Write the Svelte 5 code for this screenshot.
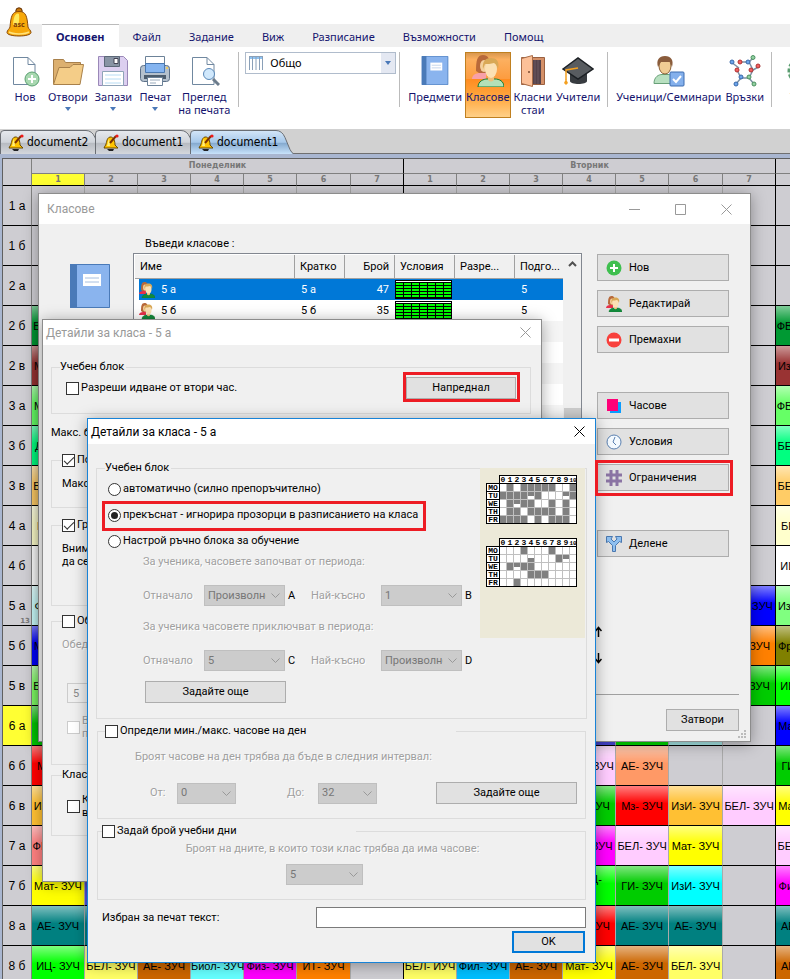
<script>
  const menu = ["Файл", "Задание", "Виж", "Разписание", "Възможности", "Помощ"];
  const docs = ["document2", "document1", "document1"];
  const periods = [1, 2, 3, 4, 5, 6, 7];

  const Z = "- ЗУЧ";
  const lesson = (name, color) => ({ text: name, color });

  // cells: [column, text, colour]
  const timetable = [
    { name: "1 а", cells: [] },
    { name: "1 б", cells: [] },
    { name: "2 а", cells: [] },
    { name: "2 б", cells: [[0, "БЕЛ" + Z, "#009933"], [14, "ФВС" + Z, "#009933"]] },
    { name: "2 в", cells: [[0, "Мат" + Z, "#993333"], [14, "ИзИ" + Z, "#993333"]] },
    { name: "3 а", cells: [[0, "Мат" + Z, "#66ff66"], [14, "ФВС" + Z, "#66ff66"]] },
    { name: "3 б", cells: [[0, "Дет" + Z, "#00ff80"], [14, "БЕЛ" + Z, "#00ff80"]] },
    { name: "3 в", cells: [[0, "БЕЛ" + Z, "#ffcc66"], [14, "БЕЛ" + Z, "#ffcc66"]] },
    { name: "4 а", cells: [[0, "БЕ" + Z, "#ffffcc"], [14, "БЕ" + Z, "#ffffcc"]] },
    { name: "4 б", cells: [[0, "", "#ffffff"], [14, "ИЦ" + Z, "#ffffff"]] },
    { name: "5 а", note: 13, cells: [[0, "Физ" + Z, "#ccffff"], [13, "Мат" + Z, "#0000ff"], [14, "ИзИ" + Z, "#80ff80"]] },
    { name: "5 б", cells: [[0, "Мат" + Z, "#0000ff"], [13, "ИТ" + Z, "#ff8000"], [14, "Фре" + Z, "#808000"]] },
    { name: "5 в", cells: [[0, "БЕЛ" + Z, "#80ff66"], [13, "ГИ" + Z, "#00cc00"], [14, "ИЦ" + Z, "#00ff00"]] },
    { name: "6 а", current: true, cells: [[0, "ГИ" + Z, "#00cc00"], [10, "", "#4d4de6"], [11, "", "#00dd00"], [12, "", "#a6e6e6"], [14, "Мат" + Z, "#0000ff"]] },
    { name: "6 б", cells: [[0, "Мз" + Z, "#ff0000"], [10, "БЕЛ" + Z, "#ffccff"], [11, "АЕ" + Z, "#ff9966"], [14, "ГИ" + Z, "#00cc00"]] },
    { name: "6 в", cells: [[0, "ИзИ" + Z, "#ffc033"], [10, "ГИ" + Z, "#00cc00"], [11, "Мз" + Z, "#ff0000"], [12, "ИзИ" + Z, "#ffc033"], [13, "БЕЛ" + Z, "#ffccff"], [14, "Мат" + Z, "#ffff00"]] },
    { name: "7 а", cells: [[0, "ФВС" + Z, "#ff8080"], [10, "Физ" + Z, "#ff00ff"], [11, "БЕЛ" + Z, "#ffccff"], [12, "Мат" + Z, "#ffff00"], [14, "БЕЛ" + Z, "#ffccff"]] },
    { name: "7 б", cells: [[0, "Мат" + Z, "#ffff00"], [1, "", "#5050e6"], [10, "ГИЦ-\n1", "#00ff00"], [11, "ГИ" + Z, "#00cc00"], [12, "ИзИ" + Z, "#00ffff"], [14, "Физ" + Z, "#ff00ff"]] },
    { name: "8 а", cells: [[0, "АЕ" + Z, "#008080"], [1, "", "#008080"], [10, "Мз" + Z, "#ff0000"], [11, "АЕ" + Z, "#008080"], [12, "АЕ" + Z, "#008080"], [14, "АЕ" + Z, "#008080"]] },
    { name: "8 б", cells: [[0, "ИЦ" + Z, "#00ff00"], [1, "БЕЛ" + Z, "#ffff66"], [2, "АЕ" + Z, "#cc6600"], [3, "Биол" + Z, "#66ffff"], [4, "Физ" + Z, "#ff00ff"], [5, "ИТ" + Z, "#ff8000"], [7, "БЕЛ- ИУЧ", "#ffff66"], [8, "Фил" + Z, "#00bfff"], [9, "АЕ" + Z, "#cc6600"], [10, "Мат" + Z, "#ffff00"], [11, "АЕ" + Z, "#cc6600"], [12, "БЕЛ" + Z, "#ffff66"], [14, "АЕ" + Z, "#cc6600"]] },
  ].map((row) => {
    const slots = Array(15).fill(null);
    row.cells.forEach(([i, text, color]) => (slots[i] = lesson(text, color)));
    return { ...row, slots };
  });

  const classes = [
    { name: "5 а", count: 47, prep: 5 },
    { name: "5 б", count: 35, prep: 5 },
    ...Array(12).fill(null),
  ];

  const days = ["MO", "TU", "WE", "TH", "FR"];
  // g = taken, t = top half, b = bottom half
  const charts = [
    [".g.ggggg..g", "ggggtg...tg", ".gtgg..g.g.", ".gg.gggg.g.", "gggg.g.ggg."],
    ["...g...g...", "....b...gt.", ".gtgg......", "....ggg....", "..g........"],
  ];

  let mode = "split";
  let printText = "";
</script>

{#snippet bell()}
  <svg class="bell" viewBox="0 0 26 30" aria-hidden="true">
    <circle cx="13" cy="4" r="3.2" fill="#c8780c" stroke="#5f2f06" />
    <path d="M4 20C5 9 6 4.500 13 4.500s8 4.500 9 15.500c.4 2 3 3 3 5.500 0 2-5 3.500-12 3.500S1 27.500 1 25.500C1 23 3.600 22 4 20z" fill="#f7a80a" stroke="#8a4a08" />
    <path d="M7 18c.5-7 1.500-11 5-11.500 1.500 0 1.500 3 .5 12z" fill="#ffe95c" />
    <path d="M3 25c4 2.500 16 2.500 20 0" fill="none" stroke="#ffe27a" stroke-width="1.500" />
    <text x="13" y="20" text-anchor="middle" font-size="7" font-weight="bold" fill="#7a3d06">asc</text>
  </svg>
{/snippet}

{#snippet smallBell()}
  <svg class="small-bell" viewBox="0 0 16 17" aria-hidden="true">
    <path d="M4 15h7l-1 2H6z" fill="#222" />
    <path d="M2 12C4 10 3 4 7 3c4-.5 5 5 5 8l3 3H1z" fill="#ffc400" stroke="#6b4a00" />
    <path d="M6 5c-1.500 2-1 4-2 7h3z" fill="#fff07a" />
    <path d="M7 9l6-7" stroke="#7a3000" stroke-width="2" />
    <circle cx="14" cy="2" r="1.600" fill="#f01818" />
  </svg>
{/snippet}

{#snippet people()}
  <svg class="people" viewBox="0 0 32 32" aria-hidden="true">
    <path d="M0 24c0-4 4-6 8-6h6v6z" fill="var(--dress, #e8304a)" />
    <path d="M4 16C4 6 5 0 11 0c6 0 7 5 7 15l-4 3H7z" fill="#b8693a" />
    <ellipse cx="12" cy="11" rx="4" ry="6" fill="#f4cf9c" />
    <path d="M6 32c0-6 6-8 9-8h8c4 0 9 2 9 8z" fill="var(--shirt, #128a3c)" stroke="#147a30" />
    <path d="M16 20h6v5q-3 3-6 0z" fill="#eec07c" />
    <ellipse cx="19" cy="14" rx="6" ry="9" fill="#fbe0b4" />
    <path d="M11 14c-1-8 3-11 8-11s9 3 7 11c-1-3-2-5-4-6-3 1-7 1-9 1z" fill="#d9a856" />
  </svg>
{/snippet}

{#snippet book()}
  <svg class="book" viewBox="0 0 40 44" aria-hidden="true">
    <rect x="0" y="0" width="40" height="44" rx="1" fill="#8ab4ee" />
    <rect x="0" y="0" width="7" height="44" fill="#4a7ab8" />
    <path d="M.5.5h39v43H.500z" fill="none" stroke="#4a7ab8" />
    <path d="M13 10h18v12H13z" fill="#fff" />
    <path d="M15 14h14M15 18h14" stroke="#a8c0e0" />
  </svg>
{/snippet}

{#snippet cross()}
  <svg class="cross" viewBox="0 0 11 11" aria-hidden="true"><path d="M.5.5l10 10M10.500.5l-10 10" stroke="currentColor" fill="none" /></svg>
{/snippet}

{#snippet drop(value, label)}
  <span class="drop">
    <select disabled aria-label={label}><option>{value}</option></select>
    <svg viewBox="0 0 9 5" aria-hidden="true"><path d="M.5.5l4 4 4-4" fill="none" stroke="#999" /></svg>
  </span>
{/snippet}

{#snippet chart(rows)}
  <svg class="chart" viewBox="0 0 91 49" aria-hidden="true">
    <path d="M13 0h78v49H0V8h13z" fill="#000" />
    <path d="M14 1h76v7H14z" fill="#fff" />
    <path d="M14 9h76v39H14z" fill="#c0c0c0" />
    {#each rows as row, r}
      <rect x="1" y={9 + r * 8} width="12" height="7" fill="#fff" />
      <text x="7" y={15 + r * 8} font-size="8">{days[r]}</text>
      {#each row.split("") as cell, c}
        <rect x={14 + c * 7} y={9 + r * 8} width="6" height="7" fill={cell === "g" ? "#808080" : "#fff"} />
        {#if cell === "t" || cell === "b"}
          <rect x={14 + c * 7} y={(cell === "t" ? 9 : 12) + r * 8} width="6" height="4" fill="#808080" />
        {/if}
      {/each}
    {/each}
    {#each Array(11) as _, c}
      <text x={17 + c * 7} y="7" font-size={c === 10 ? 6 : 8}>{c}</text>
    {/each}
  </svg>
{/snippet}

<div class="app">
  <header>
    <div class="logo">{@render bell()}</div>
    <nav>
      <a class="active" href="#home">Основен</a>
      {#each menu as item}
        <a href="#{item}">{item}</a>
      {/each}
    </nav>
  </header>

  <div class="ribbon">
    <div class="group files">
      <button>
        <svg viewBox="0 0 32 32"><path d="M4.500 2.500H19l7 7v20H4.500z" fill="#fff" stroke="#7088a0" /><path d="M19 2.500v7h7" fill="none" stroke="#7088a0" /><circle cx="23" cy="24" r="7" fill="#a8d8b0" stroke="#5aa070" /><path d="M23 20v8M19 24h8" stroke="#fff" stroke-width="2" /></svg>
        <span>Нов</span>
      </button>
      <button>
        <svg viewBox="0 0 32 32"><path d="M1.500 29V4.500h10l2 3h15v6" fill="#dcb070" stroke="#a8804a" /><path d="M1.500 29.500L7 12.500h11l3-3h10.500L28 29.500z" fill="#f4cd88" stroke="#a8804a" /></svg>
        <span>Отвори</span><i></i>
      </button>
      <button>
        <svg viewBox="0 0 32 32"><path d="M1.500 1.500h25l4 4v25h-29z" fill="#dccff0" stroke="#9a88b8" /><path d="M7.500 1.500h15v10h-15z" fill="#8894a4" stroke="#5c6878" /><path d="M17 3.500h4v5h-4z" fill="#fff" stroke="#445" /><path d="M5.500 16.500h21v14h-21z" fill="#fff" stroke="#8fa4b8" /><path d="M8 20h16M8 24h16M8 28h16" stroke="#b8dcf4" /></svg>
        <span>Запази</span><i></i>
      </button>
      <button>
        <svg viewBox="0 0 32 32"><path d="M6.500 1.500h19v9h-19z" fill="#fff" stroke="#6c8298" /><rect x="1.500" y="10.500" width="29" height="16" rx="3" fill="#b4c0cc" stroke="#5c7088" /><path d="M6.500 8.500h19v9h-19z" fill="#84b4f0" stroke="#4a78b0" /><path d="M5 20h22v4H5z" fill="#4c5c6c" /><path d="M8.500 22.500h15v8h-15z" fill="#fff" stroke="#6c8298" /><path d="M11 25h10M11 28h6" stroke="#9ab" /><circle cx="28" cy="13" r="1" fill="#ffd040" /></svg>
        <span>Печат</span><i></i>
      </button>
      <button>
        <svg viewBox="0 0 32 32"><path d="M4.500 2.500H19l7 7v20H4.500z" fill="#fff" stroke="#7088a0" /><path d="M19 2.500v7h7" fill="none" stroke="#7088a0" /><path d="M25 24l6 6" stroke="#6c7c8c" stroke-width="3" /><circle cx="21" cy="19" r="5.500" fill="#d0e8fc" stroke="#5a88b8" /></svg>
        <span>Преглед<br />на печата</span>
      </button>
    </div>
    <div class="view">
      <svg viewBox="0 0 14 14" aria-hidden="true"><path d="M0 0h14v3H0z" fill="#8ec4f4" /><path d="M.5 0v14M3.500 0v14M7 0v14M10.500 0v14M13.500 0v14M0 .5h14" stroke="#8aa0b8" fill="none" /></svg>
      <select aria-label="Изглед"><option>Общо</option></select>
      <i></i>
    </div>
    <div class="group">
      <button>
        {@render book()}
        <span>Предмети</span>
      </button>
      <button class="on">
        {@render people()}
        <span>Класове</span>
      </button>
      <button>
        <svg viewBox="0 0 32 32"><path d="M4.500 2.500h23v27h-23z" fill="#d49068" stroke="#9a6040" /><path d="M10 5h14v24H10z" fill="#54424a" /><path d="M18 5v24M21 5v24" stroke="#6c5860" /><path d="M4.500 3.500l11-3v31l-11-3z" fill="#fcc098" stroke="#a86c48" /><circle cx="12" cy="17" r="1" fill="#7a4a30" /></svg>
        <span>Класни<br />стаи</span>
      </button>
      <button>
        <svg viewBox="0 0 32 32"><path d="M8 17v9c0 4 17 4 17 0v-9" fill="#383c40" /><path d="M1 14L16 3l15 11-15 10z" fill="#585c60" stroke="#1c2024" stroke-width="1.500" /><path d="M16 13L4 15v10" stroke="#f4a020" fill="none" stroke-width="1.500" /><path d="M4 24l-2 4 2 2 2-2z" fill="#f4a020" /></svg>
        <span>Учители</span>
      </button>
    </div>
    <div class="group">
      <button>
        <svg viewBox="0 0 32 32"><path d="M1 28.500c0-7 5-9 8-9h6c4 0 8 2 8 9z" fill="#b8e0c0" stroke="#68a078" /><ellipse cx="12" cy="11" rx="6" ry="8" fill="#f0cc94" stroke="#8a6038" /><path d="M5 12C3 5 6 1 12 1s9 4 7 11l-2-5H8z" fill="#8a5c3c" /><rect x="17" y="17" width="14" height="14" rx="1" fill="#84b0ec" stroke="#3c6cb0" /><path d="M20 24l3 3 5-6" stroke="#fff" fill="none" stroke-width="2" /></svg>
        <span>Ученици/Семинари</span>
      </button>
      <button>
        <svg viewBox="0 0 32 32"><path d="M2 7l8 6M10 7h8M8 15l4 8M14 7h6l4 8-4 8h-8M20 7l5-5M24 15l7-4M20 23l5 6M12 23l-5 6" stroke="#7c90a4" fill="none" stroke-width="1.500" /><g stroke-width="1"><g fill="#6ca4ec" stroke="#3868a8"><circle cx="3" cy="7" r="2" /><circle cx="19" cy="7" r="2" /><circle cx="12" cy="22" r="2" /><circle cx="7" cy="29" r="2" /></g><g fill="#f06060" stroke="#b03030"><circle cx="11" cy="7" r="2" /><circle cx="8" cy="15" r="2" /><circle cx="22" cy="15" r="2" /><circle cx="29" cy="11" r="2" /></g><g fill="#90d0a0" stroke="#4c9060"><circle cx="24" cy="2.500" r="2" /><circle cx="20" cy="22" r="2" /><circle cx="25" cy="29" r="2" /></g></g></svg>
        <span>Връзки</span>
      </button>
    </div>
    <div class="group tests">
      <button>
        <svg viewBox="0 0 32 32"><circle cx="16" cy="16" r="12" fill="#b8e0c0" stroke="#5a9c70" stroke-width="3" stroke-dasharray="4 2" /></svg>
        <span>Тест</span>
      </button>
    </div>
  </div>

  <div class="docs">
    {#each docs as doc, i}
      <button class:open={i === 2}>
        <svg class="shape" viewBox="0 0 104 24" aria-hidden="true">
          <defs>
            <linearGradient id="tab{i}" x1="0" y1="0" x2="0" y2="1">
              <stop offset="0" stop-color={i === 2 ? "#d4e6f8" : "#e6e9ee"} />
              <stop offset=".5" stop-color={i === 2 ? "#a6c8ea" : "#d0d4da"} />
              <stop offset=".55" stop-color={i === 2 ? "#86abd0" : "#b8bcc2"} />
              <stop offset="1" stop-color={i === 2 ? "#c8e2fa" : "#d4d7dc"} />
            </linearGradient>
          </defs>
          <path d="M.5 24V4Q.5.5 4 .5h82q6 0 9 7l5 12q2 4 4 4.500" fill="url(#tab{i})" stroke="#6a6e74" />
        </svg>
        {@render smallBell()}
        <span>{doc}</span>
      </button>
    {/each}
  </div>

  <main>
    <table class="plan">
      <colgroup>
        <col class="names" />
        {#each Array(15) as _, i}<col class:wide={i % 7 === 5} />{/each}
      </colgroup>
      <thead>
        <tr class="day">
          <th rowspan="2"></th>
          <th colspan="7" class="last">Понеделник</th>
          <th colspan="7" class="last">Вторник</th>
          <th></th>
        </tr>
        <tr class="period">
          {#each [0, 1] as day}
            {#each periods as p}
              <th class:last={p === 7} class:current={day === 0 && p === 1}>{p}</th>
            {/each}
          {/each}
          <th></th>
        </tr>
      </thead>
      <tbody>
        {#each timetable as row}
          <tr>
            <th class:current={row.current}>{row.name}{#if row.note}<small>{row.note}</small>{/if}</th>
            {#each row.slots as slot, i}
              {#if slot}
                <td class="filled" class:last={i % 7 === 6} style="--c: {slot.color}">{slot.text}</td>
              {:else}
                <td class:last={i % 7 === 6}></td>
              {/if}
            {/each}
          </tr>
        {/each}
      </tbody>
    </table>
  </main>

  <section class="window classes">
    <div class="title">
      <h2>Класове</h2>
      <div class="controls">
        <button aria-label="Намали"><svg viewBox="0 0 11 11"><path d="M0 5.500h11" stroke="currentColor" /></svg></button>
        <button aria-label="Увеличи"><svg viewBox="0 0 11 11"><path d="M.5.5h10v10H.500z" stroke="currentColor" fill="none" /></svg></button>
        <button aria-label="Затвори прозореца">{@render cross()}</button>
      </div>
    </div>
    <div class="classes-body">
      {@render book()}
      <div class="list-column">
        <p>Въведи класове :</p>
        <div class="list">
          <table>
            <colgroup><col class="c160" /><col class="c50" /><col class="c50" /><col class="c60" /><col class="c60" /><col class="c48" /></colgroup>
            <thead>
              <tr><th>Име</th><th>Кратко</th><th class="num">Брой</th><th>Условия</th><th>Разре...</th><th>Подго...</th></tr>
            </thead>
            <tbody>
              {#each classes as c, i}
                <tr class:selected={i === 0}>
                  {#if c}
                    <td><div class="who">{@render people()}{c.name}</div></td>
                    <td>{c.name}</td>
                    <td class="num">{c.count}</td>
                    <td class="terms">
                      <svg viewBox="0 0 57 19" aria-hidden="true">
                        <path d="M0 0h57v19H0z" />
                        <path d="M1 1h55v1H1z" fill="#fff" />
                        {#each Array(35) as _, k}
                          <rect x={1 + (k % 7) * 8} y={3 + Math.floor(k / 7) * 3} width="7" height="2" fill="#00ff00" />
                        {/each}
                      </svg>
                    </td>
                    <td></td>
                    <td>{c.prep}</td>
                  {:else}
                    <td colspan="6"></td>
                  {/if}
                </tr>
              {/each}
            </tbody>
          </table>
          <div class="scroll">
            <svg viewBox="0 0 9 6" aria-hidden="true"><path d="M1 5l3.500-3.500L8 5" fill="none" stroke="#505050" stroke-width="2" /></svg>
            <span></span>
          </div>
        </div>
      </div>
      <div class="side">
        <div>
          <button><svg viewBox="0 0 16 16"><circle cx="8" cy="8" r="7.500" fill="#3fbf4f" /><path d="M8 4v8M4 8h8" stroke="#fff" stroke-width="2" /></svg>Нов</button>
          <button>{@render people()}Редактирай</button>
          <button><svg viewBox="0 0 16 16"><circle cx="8" cy="8" r="7.500" fill="#f8403c" /><path d="M3 8h10" stroke="#fff" stroke-width="3" /></svg>Премахни</button>
        </div>
        <div>
          <button><svg viewBox="0 0 16 16"><path d="M4 4h11v11H4z" fill="#0a9cff" /><path d="M1 1h11v12H1z" fill="#ff0078" /></svg>Часове</button>
          <button><svg viewBox="0 0 16 16"><circle cx="8" cy="8" r="7" fill="#f4faff" stroke="#5a80b0" /><path d="M9 3L7 8l3 3" stroke="#5a80b0" fill="none" /></svg>Условия</button>
          <button><svg viewBox="0 0 16 16"><path d="M5 0v16M11 0v16M0 5h16M0 11h16" stroke="#8b74a4" stroke-width="3" /></svg>Ограничения</button>
        </div>
        <div>
          <button><svg viewBox="0 0 16 16"><path d="M6.500 15.500V9.500L2.500 5.500.5 6.500V.5h6L5 3l3 3 3-3L9.500.5h6v6l-2-1-4 4v6z" fill="#8fc0f0" stroke="#4a78b0" /></svg>Делене</button>
        </div>
        <svg class="arrows" viewBox="0 0 8 38" aria-hidden="true"><path d="M4.500 11V2M1.500 5l3-3.500 3 3.500M4.500 27v9M1.500 33l3 3.500 3-3.500" fill="none" stroke="#000" stroke-width="1.500" /></svg>
      </div>
    </div>
    <div class="classes-foot"><button class="btn">Затвори</button></div>
    <svg class="grip" viewBox="0 0 9 9" aria-hidden="true"><path d="M6 0h2v2H6zM3 3h2v2H3zM6 3h2v2H6zM0 6h2v2H0zM3 6h2v2H3zM6 6h2v2H6z" fill="#bbb" /></svg>
  </section>

  <section class="window details">
    <div class="title">
      <h2>Детайли за класа - 5 а</h2>
      <button aria-label="Затвори прозореца">{@render cross()}</button>
    </div>
    <div class="details-body">
      <fieldset class="first">
        <legend>Учебен блок</legend>
        <div class="row">
          <label><input type="checkbox" />Разреши идване от втори час.</label>
          <button class="btn">Напреднал</button>
        </div>
      </fieldset>
      <p class="gaps">Макс. бр.</p>
      <fieldset class="f55">
        <legend><label><input type="checkbox" checked />По</label></legend>
        <p>Макс.</p>
      </fieldset>
      <fieldset class="f88">
        <legend><label><input type="checkbox" checked />Гр</label></legend>
        <p>Внима<br />да се</p>
      </fieldset>
      <fieldset class="f151">
        <legend><label><input type="checkbox" />Об</label></legend>
        <p class="off">Обед</p>
        <input class="lunch" value="5" disabled aria-label="Обед" />
        <label class="off"><input type="checkbox" disabled /><span>В<br />п</span></label>
      </fieldset>
      <fieldset class="f68">
        <legend>Класен</legend>
        <label><input type="checkbox" /><span>К<br />в</span></label>
      </fieldset>
    </div>
  </section>

  <section class="window advanced">
    <div class="title">
      <h2>Детайли за класа - 5 а</h2>
      <button aria-label="Затвори прозореца">{@render cross()}</button>
    </div>
    <div class="advanced-body">
      <fieldset class="block">
        <legend>Учебен блок</legend>
        <div class="split">
          <div class="options">
            <label><input type="radio" bind:group={mode} value="auto" />автоматично (силно препоръчително)</label>
            <label><input type="radio" bind:group={mode} value="split" />прекъснат - игнорира прозорци в разписанието на класа</label>
            <label><input type="radio" bind:group={mode} value="manual" />Настрой ръчно блока за обучение</label>
            <p class="hint">За ученика, часовете започват от периода:</p>
            <div class="range">
              <span>Отначало</span>{@render drop("Произволно", "Започват отначало")}<b>A</b>
              <span>Най-късно</span>{@render drop("1", "Започват най-късно")}<b>B</b>
            </div>
            <p class="hint">За ученика часовете приключват в периода:</p>
            <div class="range">
              <span>Отначало</span>{@render drop("5", "Приключват отначало")}<b>C</b>
              <span>Най-късно</span>{@render drop("Произволно", "Приключват най-късно")}<b>D</b>
            </div>
            <button class="btn more">Задайте още</button>
          </div>
          <div class="samples">
            {#each charts as rows}{@render chart(rows)}{/each}
          </div>
        </div>
      </fieldset>

      <fieldset class="limits">
        <legend><label><input type="checkbox" />Определи мин./макс. часове на ден</label></legend>
        <p class="hint">Броят часове на ден трябва да бъде в следния интервал:</p>
        <div class="interval">
          <span>От:</span>{@render drop("0", "От")}
          <span>До:</span>{@render drop("32", "До")}
          <button class="btn more">Задайте още</button>
        </div>
      </fieldset>

      <fieldset class="count">
        <legend><label><input type="checkbox" />Задай брой учебни дни</label></legend>
        <p class="hint">Броят на дните, в които този клас трябва да има часове:</p>
        {@render drop("5", "Брой дни")}
      </fieldset>

      <div class="print">
        <label for="print">Избран за печат текст:</label>
        <input id="print" type="text" bind:value={printText} />
      </div>
      <button class="btn ok">OK</button>
    </div>
  </section>

  <div class="mark mark-limits"></div>
  <div class="mark mark-advanced"></div>
  <div class="mark mark-split"></div>
</div>

<style>
  :global(body) {
    background: #fff;
  }

  .app {
    position: relative;
    height: 100vh;
    overflow: hidden;
    font: 11px/14px "Noto Sans", "Open Sans", sans-serif;
    color: #000;
  }

  .app :global(*) {
    box-sizing: border-box;
  }

  button, select, input {
    font: inherit;
    color: inherit;
    margin: 0;
  }

  button {
    border: 0;
    padding: 0;
    background: none;
  }

  h2, p {
    margin: 0;
    font-size: inherit;
    font-weight: normal;
  }

  svg {
    display: block;
    flex: none;
  }

  /* menu */
  header {
    display: flex;
    padding-top: 24px;
    background: linear-gradient(#fff 24px, #efefef 24px);
    height: 47px;
  }

  .logo {
    width: 42px;
    margin-top: -17px;
    padding-left: 6px;
  }

  .bell {
    width: 26px;
    height: 30px;
  }

  nav {
    display: flex;
  }

  nav a {
    padding: 6px 14px 3px;
    color: #14146e;
    text-decoration: none;
    white-space: nowrap;
  }

  nav a.active {
    padding: 5px 14px 3px;
    background: #fff;
    border-top: 1px solid #bbb;
    font-weight: bold;
  }

  /* ribbon */
  .ribbon {
    display: flex;
    align-items: flex-start;
    height: 82px;
    padding: 5px 0 0 8px;
    color: #14146e;
    overflow: hidden;
  }

  .group {
    display: flex;
    flex: none;
    gap: 2px;
    padding: 0 6px 0 7px;
    border-right: 1px solid #bbb;
    height: 55px;
  }

  .group.files {
    gap: 5px;
    padding: 0 7px 0 0;
  }

  .group.tests {
    padding-left: 12px;
  }

  .view + .group {
    border-left: 1px solid #bbb;
    margin-left: 3px;
  }

  .group button {
    display: flex;
    flex-direction: column;
    align-items: center;
    min-width: 34px;
    height: 66px;
    padding: 3px 1px 0;
    line-height: 13px;
  }

  .group button svg {
    width: 32px;
    height: 32px;
  }

  .group button .book {
    height: 29px;
    margin: 1px 0 2px;
  }

  .group button span {
    margin-top: 3px;
    white-space: nowrap;
  }

  .group button.on {
    --dress: #f8a0a8;
    --shirt: #b4e0b8;
    border: 1px solid #c08020;
    padding: 2px 0 0;
    background: linear-gradient(#d89850, #fcb060 10%, #fc9c40 40%, #ff8c20 41%, #ffa840 70%, #ffd088);
  }

  .ribbon i {
    border: 3px solid transparent;
    border-top: 4px solid #4a78b8;
    border-bottom: 0;
    margin-top: 4px;
  }

  .view {
    display: flex;
    align-items: center;
    width: 151px;
    height: 22px;
    flex: none;
    margin-left: 6px;
    border: 1px solid #b0bccc;
    color: #000;
    padding-left: 3px;
  }

  .view svg {
    width: 14px;
    height: 14px;
  }

  .view select {
    flex: 1;
    appearance: none;
    border: 0;
    background: none;
    padding: 0 7px;
    font-size: 11px;
  }

  .view i {
    margin: 0;
    width: 14px;
    height: 20px;
    border: 0;
    background: #e4e8f2;
    display: grid;
    place-items: center;
  }

  .view i::before {
    content: "";
    border: 3px solid transparent;
    border-top: 4px solid #4a78b8;
    border-bottom: 0;
  }

  /* documents */
  .docs {
    display: flex;
    height: 25px;
    padding-top: 1px;
    background: #d1d1d1;
    border-bottom: 1px solid #707070;
  }

  .docs button {
    position: relative;
    display: flex;
    align-items: center;
    flex: none;
    gap: 3px;
    width: 104px;
    height: 24px;
    margin-right: -9px;
    padding-left: 8px;
    font-family: "DejaVu Sans Condensed", "DejaVu Sans", sans-serif;
    font-size: 12px;
  }

  .docs button.open {
    z-index: 1;
  }

  .shape {
    position: absolute;
    inset: 0;
  }

  .small-bell {
    position: relative;
    width: 16px;
    height: 17px;
  }

  .docs span {
    position: relative;
  }

  /* timetable */
  main {
    padding: 4px 0 0 2px;
    background: #a9b6d0;
  }

  .plan {
    width: 828px;
    table-layout: fixed;
    border-collapse: separate;
    border-spacing: 0;
    border: 1px solid #606060;
    background: #cecdd2;
    font-family: "Liberation Sans", Arial, sans-serif;
  }

  .plan col {
    width: 53px;
  }

  .plan col.wide {
    width: 54px;
  }

  .plan col.names {
    width: 29px;
  }

  .plan th, .plan td {
    padding: 0;
    border-right: 1px solid #aaa;
    border-bottom: 1px solid #000;
    text-align: center;
    font-weight: normal;
    white-space: pre;
  }

  .plan thead th {
    color: #777;
    border-color: #808080;
    font: bold 8px/10px "DejaVu Sans", sans-serif;
  }

  .plan .day th {
    height: 15px;
  }

  .plan .period th {
    height: 12px;
  }

  .plan .period th, .plan .day th[rowspan] {
    border-bottom-color: #000;
  }

  .plan tbody th {
    position: relative;
    height: 40px;
    border-right-color: #808080;
    font-size: 12px;
  }

  .plan small {
    position: absolute;
    right: 1px;
    bottom: 0;
    color: #777;
    font: bold 7px/8px "DejaVu Sans", sans-serif;
  }

  .plan .last {
    border-right-color: #000;
  }

  .plan .current {
    background: #ffff33;
  }

  .plan .filled {
    background: linear-gradient(rgba(255, 255, 255, 0.5), rgba(255, 255, 255, 0) 45%) var(--c);
  }

  /* windows */
  .window {
    position: absolute;
    background: #f0f0f0;
    border: 1px solid #8c8c8c;
    box-shadow: 0 2px 14px rgba(0, 0, 0, 0.35);
    font-family: Roboto, "Liberation Sans", sans-serif;
  }

  .title {
    display: flex;
    justify-content: space-between;
    align-items: center;
    height: 25px;
    padding: 0 10px 0 3px;
    background: #fff;
    color: #999;
    font-size: 12px;
  }

  .title svg {
    width: 11px;
    height: 11px;
  }

  .controls {
    display: flex;
    gap: 35px;
  }

  .btn {
    height: 22px;
    border: 1px solid #adadad;
    background: #e1e1e1;
  }

  fieldset {
    margin: 0;
    border: 1px solid #dcdcdc;
    padding: 0 14px 0 8px;
    min-width: 0;
  }

  legend {
    height: 14px;
    padding: 0 2px 0 0;
  }

  label {
    display: flex;
    align-items: center;
    gap: 2px;
    white-space: nowrap;
  }

  input[type="checkbox"], input[type="radio"] {
    appearance: none;
    flex: none;
    display: grid;
    place-items: center;
    width: 13px;
    height: 13px;
    border: 1px solid #333;
    background: #fff;
  }

  input[type="checkbox"]:checked::before {
    content: "";
    width: 9px;
    height: 4px;
    border: solid #333;
    border-width: 0 0 1px 1px;
    transform: translateY(-1px) rotate(-45deg);
  }

  input[type="checkbox"]:disabled {
    border-color: #ccc;
  }

  input[type="radio"] {
    border-radius: 50%;
  }

  input[type="radio"]:checked::before {
    content: "";
    width: 7px;
    height: 7px;
    border-radius: 50%;
    background: #222;
  }

  .hint, .off, .range span, .interval span {
    color: #a0a0a0;
    text-shadow: 1px 1px #fff;
    white-space: nowrap;
  }

  /* classes */
  .classes {
    left: 38px;
    top: 193px;
    width: 713px;
  }

  .classes .title {
    height: 30px;
    padding: 0 18px 0 8px;
  }

  .classes-body {
    display: flex;
    align-items: flex-start;
  }

  .classes-body > .book {
    width: 40px;
    height: 44px;
    margin: 40px 23px 0 31px;
  }

  .list-column {
    width: 449px;
    padding-top: 13px;
  }

  .list-column p {
    padding: 0 12px 2px;
  }

  .list {
    display: flex;
    border: 1px solid #828790;
    background: #fff;
    padding: 1px 0 0 1px;
  }

  .list table {
    width: 428px;
    table-layout: fixed;
    border-collapse: separate;
    border-spacing: 0;
  }

  .c160 { width: 160px; }
  .c60 { width: 60px; }
  .c50 { width: 50px; }
  .c48 { width: 48px; }

  .list th {
    height: 24px;
    padding: 0 5px;
    border-right: 1px solid #a0a0a0;
    border-bottom: 1px solid #a0a0a0;
    background: #f0f0f0;
    font-weight: normal;
    text-align: left;
    white-space: nowrap;
  }

  .list th:last-child {
    border-right: 0;
  }

  .list td {
    height: 21px;
    padding: 0 6px;
  }

  .list tr:nth-child(odd) td {
    background: #f5f5f5;
  }

  .list tr.selected td {
    background: #0078d7;
    color: #fff;
  }

  .list td:first-child {
    padding: 0 4px;
    box-shadow: inset 4px 0 #fff;
  }

  .list .num {
    text-align: right;
  }

  .list .terms {
    padding: 0;
  }

  .terms svg {
    width: 57px;
    height: 19px;
  }

  .who {
    display: flex;
    align-items: center;
    gap: 6px;
  }

  .people {
    width: 16px;
    height: 16px;
  }

  .scroll {
    width: 18px;
    background: #f0f0f0;
    display: flex;
    flex-direction: column;
    align-items: center;
  }

  .scroll svg {
    width: 9px;
    height: 6px;
    margin: 6px 0 141px;
  }

  .scroll span {
    width: 17px;
    height: 60px;
    background: #cdcdcd;
  }

  .side {
    display: flex;
    flex-direction: column;
    gap: 39px;
    width: 132px;
    margin-left: 15px;
    padding-top: 30px;
  }

  .side div {
    display: flex;
    flex-direction: column;
    gap: 9px;
  }

  .side button {
    display: flex;
    align-items: center;
    gap: 7px;
    height: 27px;
    padding-left: 8px;
    border: 1px solid #adadad;
    background: #e1e1e1;
  }

  .side button svg {
    width: 16px;
    height: 16px;
  }

  .arrows {
    width: 8px;
    height: 38px;
    margin: 30px 0 0 -3px;
  }

  .classes-foot {
    display: flex;
    justify-content: flex-end;
    margin: 30px 11px 0;
    padding: 14px 0 10px;
    border-top: 1px solid #a0a0a0;
  }

  .classes-foot .btn, .ok {
    width: 73px;
  }

  .grip {
    position: absolute;
    right: 3px;
    bottom: 2px;
    width: 9px;
    height: 9px;
  }

  /* class details */
  .details {
    left: 42px;
    top: 319px;
    width: 500px;
  }

  .details-body {
    padding: 15px 10px 45px 8px;
  }

  .details .row {
    display: flex;
    justify-content: space-between;
    padding: 3px 0 14px 6px;
  }

  .details .row .btn {
    width: 110px;
  }

  .gaps {
    margin: 12px 0 13px;
  }

  .f55, .f88, .f151, .f68 {
    padding-left: 10px;
  }

  .f55 { min-height: 55px; margin-bottom: 10px; }
  .f88 { min-height: 88px; margin-bottom: 8px; }
  .f151 { min-height: 151px; margin-bottom: 3px; }
  .f68 { min-height: 68px; }

  .details fieldset p {
    padding-top: 10px;
    line-height: 13px;
  }

  .details fieldset > label {
    padding: 11px 0 0 5px;
    line-height: 13px;
  }

  .lunch {
    width: 40px;
    height: 20px;
    margin: 32px 0 0 5px;
    padding: 0 5px;
    border: 1px solid #ccc;
    background: #f0f0f0;
    color: #888;
    display: block;
  }

  /* advanced details */
  .advanced {
    left: 87px;
    top: 418px;
    width: 509px;
    border-color: #1883d7;
  }

  .advanced .title {
    color: #000;
  }

  .advanced-body {
    display: flex;
    flex-direction: column;
    padding: 17px 8px 9px;
  }

  .block {
    padding: 0 1px 15px 8px;
  }

  .split {
    display: flex;
    justify-content: space-between;
    align-items: flex-start;
  }

  .options {
    padding: 1px 0 0 3px;
  }

  .options label {
    height: 26px;
  }

  .hint {
    line-height: 16px;
  }

  .options .hint {
    padding-left: 35px;
  }

  .range {
    display: grid;
    grid-template-columns: 61px 81px 26px 70px 81px auto;
    align-items: center;
    padding: 15px 0 10px 35px;
  }

  .range + .hint {
    margin-top: 3px;
  }

  .range b {
    font-weight: normal;
    padding-left: 3px;
  }

  .drop {
    position: relative;
    display: block;
  }

  .drop select {
    appearance: none;
    display: block;
    width: 100%;
    height: 21px;
    padding: 0 18px 0 3px;
    border: 1px solid #bfbfbf;
    border-radius: 0;
    background: #ccc;
    color: #777;
    opacity: 1;
    text-overflow: clip;
  }

  .drop svg {
    position: absolute;
    right: 5px;
    top: 8px;
    width: 9px;
    height: 5px;
  }

  .more {
    width: 141px;
  }

  .options .more {
    margin-left: 37px;
  }

  .samples {
    width: 105px;
    height: 170px;
    margin-top: -7px;
    padding: 7px 6px;
    background: #ece9d8;
  }

  .chart {
    width: 91px;
    height: 49px;
    margin-bottom: 14px;
  }

  .chart text {
    font-family: "Liberation Mono", monospace;
    font-weight: bold;
    text-anchor: middle;
  }

  .limits, .count {
    margin: 5px 1px 0;
    padding: 0 8px 14px 7px;
  }

  .limits legend {
    width: 351px;
  }

  .limits .hint {
    padding: 11px 0 0 30px;
  }

  .interval {
    display: grid;
    grid-template-columns: 27px 110px 31px 59px 1fr;
    align-items: center;
    padding: 17px 0 0 45px;
  }

  .interval .drop {
    width: 59px;
  }

  .interval .more {
    justify-self: end;
  }

  .count {
    padding-left: 4px;
  }

  .count legend {
    width: 254px;
  }

  .count .hint {
    padding: 3px 14px 7px 0;
    text-align: center;
  }

  .count .drop {
    width: 77px;
    margin-left: 184px;
  }

  .print {
    display: flex;
    justify-content: space-between;
    padding: 7px 1px 3px 6px;
  }

  .print input {
    width: 270px;
    height: 21px;
    border: 1px solid #7a7a7a;
  }

  .ok {
    align-self: flex-end;
    border: 2px solid #0078d7;
    margin-right: 2px;
  }

  /* red callouts over the windows */
  .mark {
    position: absolute;
    border: 3px solid #ed1c24;
    pointer-events: none;
  }

  .mark-limits {
    left: 595px;
    top: 460px;
    width: 138px;
    height: 36px;
  }

  .mark-advanced {
    left: 403px;
    top: 372px;
    width: 117px;
    height: 30px;
  }

  .mark-split {
    left: 102px;
    top: 501px;
    width: 324px;
    height: 30px;
  }
</style>
